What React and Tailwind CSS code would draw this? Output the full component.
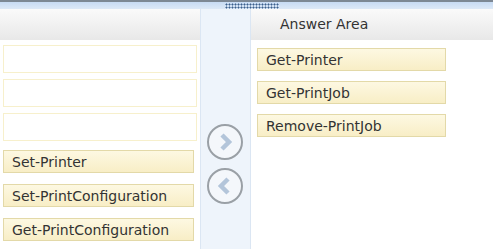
import React from "react";

const Item = ({ label }) => (
  <div className="h-[23px] flex items-center pl-[8px] border border-[#e3d9a8] bg-gradient-to-b from-[#fdf8e2] to-[#f8eec6] text-[14px] text-[#333] leading-none">
    {label}
  </div>
);

const Empty = () => (
  <div className="h-[28px] border border-[#f7f0cc] bg-white" />
);

const CircleBtn = ({ dir }) => (
  <div className="w-[36px] h-[36px] rounded-full border-2 border-[#9aa0a6] bg-[#f4f7fb] flex items-center justify-center">
    <svg width="16" height="20" viewBox="0 0 16 20">
      {dir === "right" ? (
        <path d="M5 3 L12 10 L5 17" fill="none" stroke="#b3c5da" strokeWidth="4.5" />
      ) : (
        <path d="M11 3 L4 10 L11 17" fill="none" stroke="#b3c5da" strokeWidth="4.5" />
      )}
    </svg>
  </div>
);

export default function App() {
  return (
    <div className="w-[493px] h-[249px] overflow-hidden bg-white flex flex-col font-['DejaVu_Sans',sans-serif]">
      {/* Top bar */}
      <div className="h-[9px] border-t-2 border-[#7d8894] bg-gradient-to-b from-[#c7dbf3] to-[#dde9f7] flex justify-center">
        <div className="w-[54px] ml-[10px] mt-[1px] h-[6px] bg-[radial-gradient(circle,#3b5f8c_40%,transparent_55%)] bg-[length:3px_3px]" />
      </div>
      <div className="flex flex-1">
        {/* Choices */}
        <div className="w-[200px] flex flex-col">
          <div className="h-[31px] bg-gradient-to-b from-[#fafafa] to-[#e8e8e8]" />
          <div className="flex flex-col gap-[6px] px-[3px] pt-[5px]">
            <Empty />
            <Empty />
            <Empty />
          </div>
          <div className="flex flex-col gap-[11px] pl-[3px] pr-[6px] pt-[9px]">
            <Item label="Set-Printer" />
            <Item label="Set-PrintConfiguration" />
            <Item label="Get-PrintConfiguration" />
          </div>
        </div>
        {/* Arrows */}
        <div className="w-[51px] bg-[#eef4fb] border-l border-r border-[#dbe6f3] flex flex-col items-center pt-[115px] gap-[8px] pr-[2px]">
          <CircleBtn dir="right" />
          <CircleBtn dir="left" />
        </div>
        {/* Answer area */}
        <div className="flex-1 flex flex-col">
          <div className="h-[31px] bg-gradient-to-b from-[#fafafa] to-[#e8e8e8] flex items-center pl-[29px] text-[14px] text-[#333]">
            Answer Area
          </div>
          <div className="w-[195px] flex flex-col gap-[10px] pl-[6px] pt-[8px]">
            <Item label="Get-Printer" />
            <Item label="Get-PrintJob" />
            <Item label="Remove-PrintJob" />
          </div>
        </div>
      </div>
    </div>
  );
}
